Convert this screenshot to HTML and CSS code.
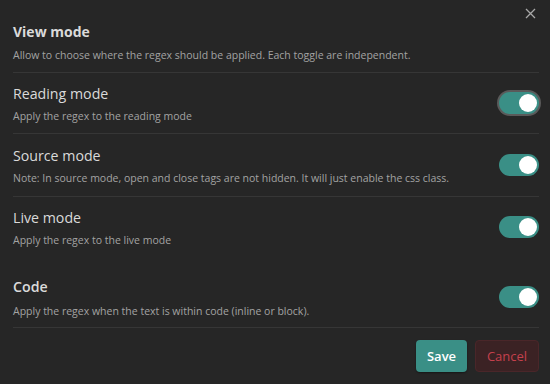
FILE: index.html
```html
<!DOCTYPE html>
<html>
<head>
<meta charset="utf-8">
<link rel="stylesheet" href="styles.css">
</head>
<body>
<div class="modal">
  <button class="close" aria-label="Close">
    <svg width="11" height="11" viewBox="0 0 11 11"><path d="M1 1L10 10M10 1L1 10" stroke="#a8a8a8" stroke-width="1.3" fill="none"/></svg>
  </button>
  <div class="heading">
    <div class="heading-title">View mode</div>
    <div class="desc">Allow to choose where the regex should be applied. Each toggle are independent.</div>
  </div>
  <div class="item reading">
    <div class="info">
      <div class="name">Reading mode</div>
      <div class="desc">Apply the regex to the reading mode</div>
    </div>
    <div class="toggle focused"><span class="knob"></span></div>
  </div>
  <div class="item source">
    <div class="info">
      <div class="name">Source mode</div>
      <div class="desc">Note: In source mode, open and close tags are not hidden. It will just enable the css class.</div>
    </div>
    <div class="toggle"><span class="knob"></span></div>
  </div>
  <div class="item live">
    <div class="info">
      <div class="name">Live mode</div>
      <div class="desc">Apply the regex to the live mode</div>
    </div>
    <div class="toggle"><span class="knob"></span></div>
  </div>
  <div class="item code">
    <div class="info">
      <div class="name bold">Code</div>
      <div class="desc">Apply the regex when the text is within code (inline or block).</div>
    </div>
    <div class="toggle"><span class="knob"></span></div>
  </div>
  <div class="actions">
    <button class="btn save">Save</button>
    <button class="btn cancel">Cancel</button>
  </div>
</div>
</body>
</html>
```
FILE: styles.css
```css
* { box-sizing: border-box; }
html, body {
  margin: 0;
  padding: 0;
  background: #262626;
  width: 550px;
  height: 384px;
  overflow: hidden;
}
body {
  font-family: "Open Sans", "Noto Sans", sans-serif;
  color: #dadada;
}
.modal {
  position: relative;
  padding: 22px 11px 0 13px;
}
.close {
  position: absolute;
  top: 8px;
  right: 14px;
  background: none;
  border: 0;
  padding: 0;
  width: 11px;
  height: 11px;
  display: flex;
}
.heading {
  padding-bottom: 10px;
  border-bottom: 1px solid #363636;
}
.heading-title {
  font-size: 14px;
  font-weight: 700;
  line-height: 20px;
}
.desc {
  font-size: 10.5px;
  color: #a3a3a3;
  line-height: 14px;
  margin-top: 5px;
}
.heading .desc { margin-top: 6px; }
.item {
  display: flex;
  align-items: center;
  justify-content: space-between;
  border-bottom: 1px solid #363636;
}
.item.reading { height: 61px; }
.item.source { height: 63px; }
.item.live { height: 60px; border-bottom: 0; }
.item.code { height: 71px; padding-top: 10px; }
.item.code .desc { margin-top: 7px; }
.name {
  font-size: 14.2px;
  line-height: 20px;
}
.name.bold { font-weight: 600; }
.toggle {
  width: 40px;
  height: 22px;
  border-radius: 11px;
  background: #3a8f86;
  display: flex;
  align-items: center;
  justify-content: flex-end;
  padding: 0 2px;
  flex-shrink: 0;
}
.toggle.focused {
  box-shadow: 0 0 0 2px #5a5a5a;
}
.knob {
  width: 18px;
  height: 18px;
  border-radius: 50%;
  background: #ffffff;
}
.actions {
  display: flex;
  justify-content: flex-end;
  gap: 8px;
  padding-top: 12px;
}
.btn {
  font-family: "Open Sans", "Noto Sans", sans-serif;
  font-size: 13px;
  height: 32px;
  border-radius: 4px;
  padding: 0;
}
.save {
  width: 51px;
  background: #3a8f86;
  color: #ffffff;
  border: 0;
  font-weight: 600;
  box-shadow: 0 1px 2px rgba(0,0,0,0.4);
}
.cancel {
  width: 64px;
  background: #3b2224;
  color: #c5404c;
  border: 1px solid #4a2629;
}
```
